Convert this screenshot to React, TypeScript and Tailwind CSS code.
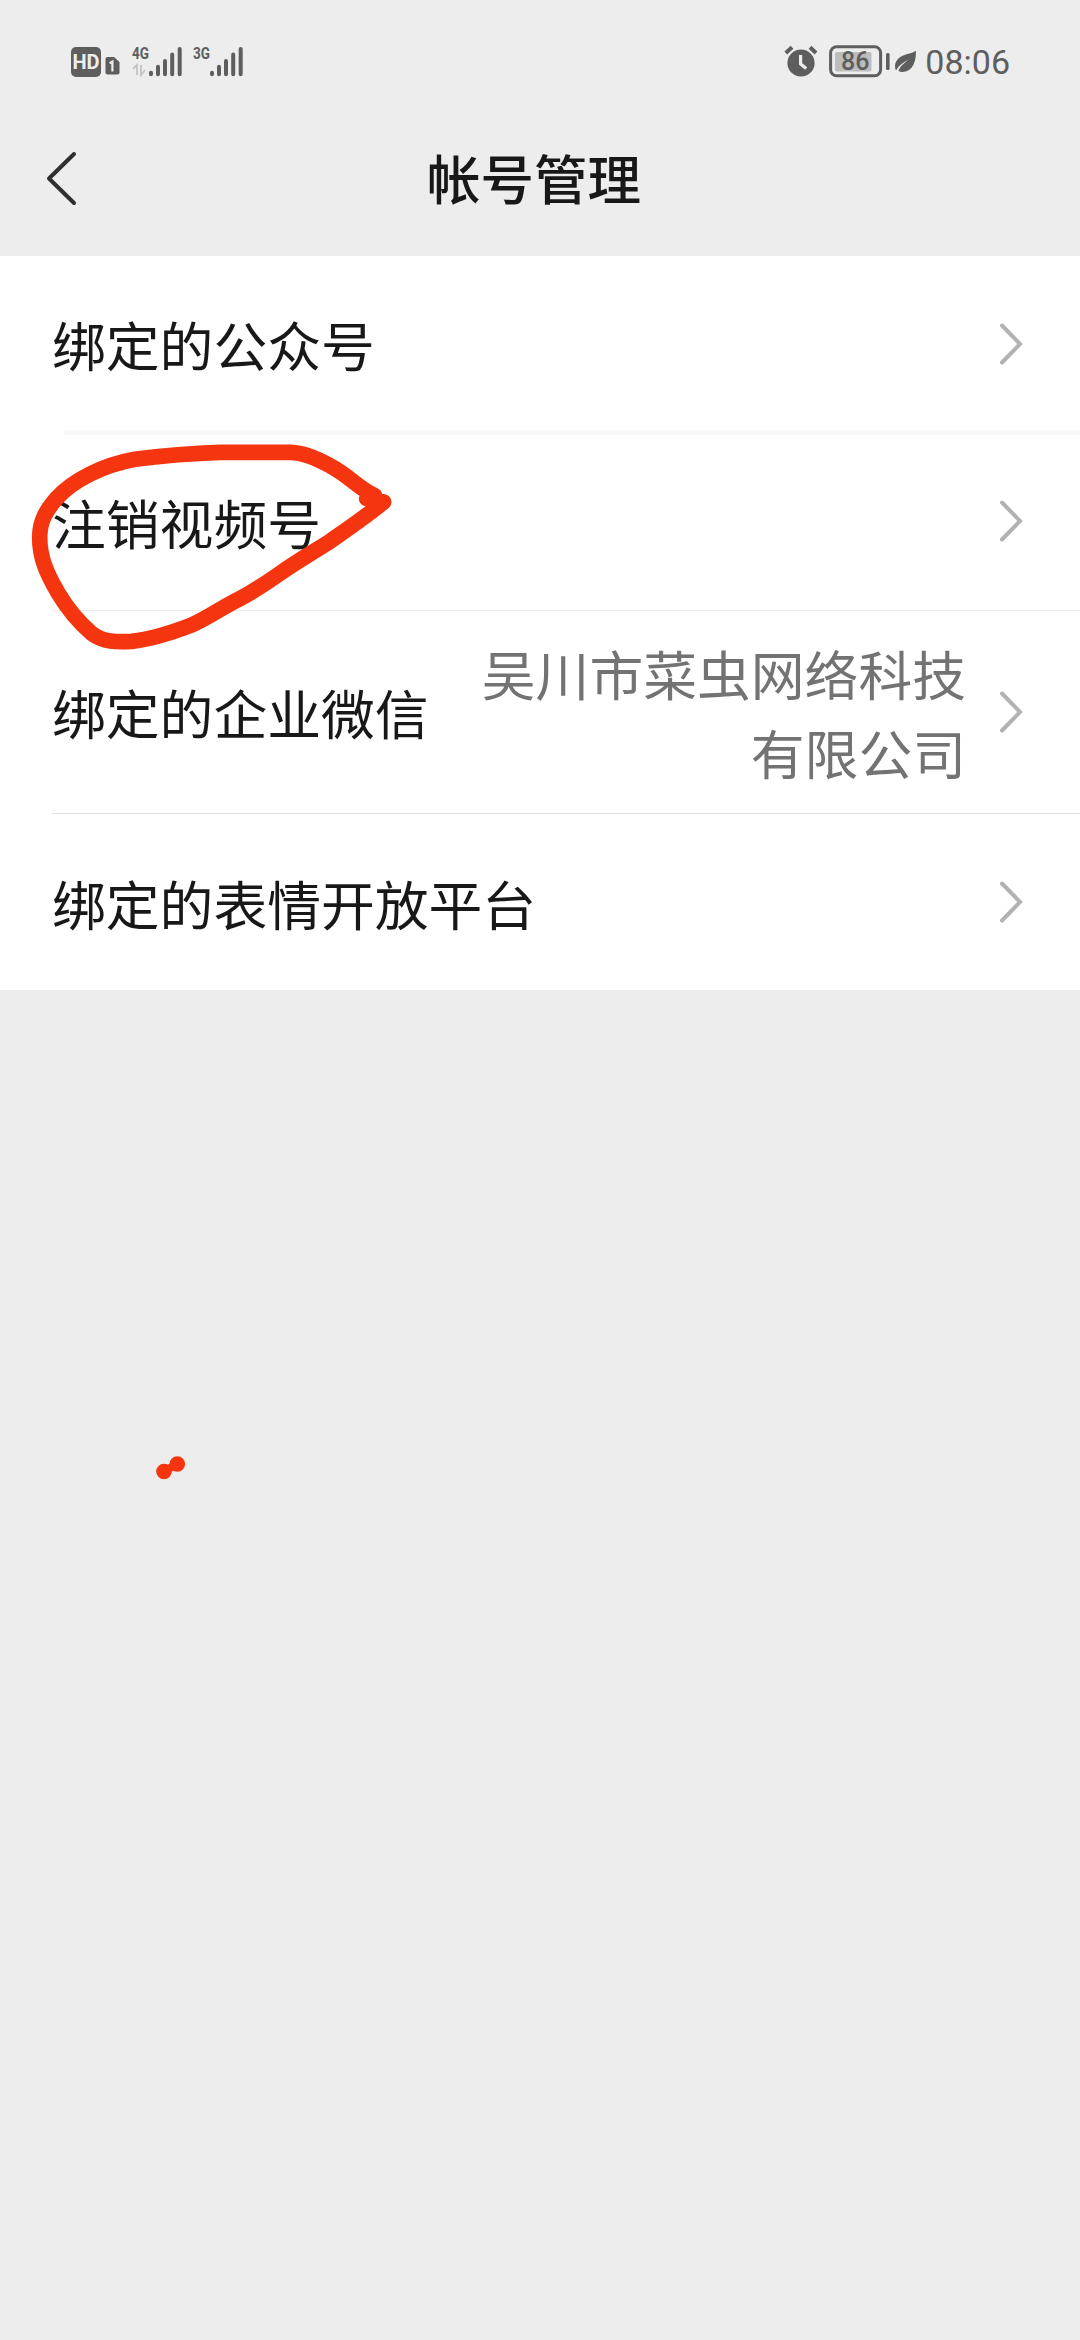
const INK = "#5e5e5e";

function HdBadge() {
  return (
    <div className="mt-[47px] flex h-[30px] w-[30px] items-center justify-center rounded-[5px] bg-[#5e5e5e] font-['Roboto',sans-serif] text-[20px] font-bold leading-none text-[#eeeeee]">
      HD
    </div>
  );
}

function SimCard() {
  return (
    <svg className="ml-[4px] mt-[57px]" width="15" height="18" viewBox="0 0 15 18">
      <path d="M2.5 0H9L14.5 5V15.5Q14.5 17.5 12.5 17.5H2.5Q.5 17.5 .5 15.5V2Q.5 0 2.5 0Z" fill={INK} />
      <path d="M4.6 6.2L7.4 4.6V14.5" fill="none" stroke="#eee" strokeWidth="2.2" />
    </svg>
  );
}

function Signal({ label, arrows }: { label: string; arrows?: boolean }) {
  return (
    <svg className="mt-[44px]" width="52" height="34" viewBox="0 0 52 34">
      <text x="0" y="15" fontFamily="Roboto, sans-serif" fontSize="17" fontWeight="700" fill={INK} textLength="17" lengthAdjust="spacingAndGlyphs">
        {label}
      </text>
      {arrows && (
        <g stroke="#c4c4c4" strokeWidth="1.8" fill="none">
          <path d="M1 25L5 21V31M9 21V31L13 26" />
        </g>
      )}
      <g stroke={INK} strokeWidth="4" strokeLinecap="round">
        <path d="M19 28.8V30.2M26 22.8V30.2M33 17V30.2M40.2 10.5V30.2M47.7 5V30.2" />
      </g>
    </svg>
  );
}

function AlarmClock() {
  return (
    <svg className="mt-[45px]" width="34" height="33" viewBox="0 0 34 33">
      <circle cx="17" cy="18" r="13.6" fill={INK} />
      <path d="M1.8 8L8 2.2M26 2.2L32 8" stroke={INK} strokeWidth="4" />
      <path d="M16.6 10V19L22.2 23.5" fill="none" stroke="#eee" strokeWidth="3.2" />
    </svg>
  );
}

function Battery() {
  return (
    <svg className="ml-[11px] mt-[45px]" width="62" height="33" viewBox="0 0 62 33">
      <rect x="1.6" y="1.8" width="50" height="29" rx="6" fill="none" stroke={INK} strokeWidth="3" />
      <rect x="6" y="7" width="36.5" height="19.5" rx="2" fill="#bdbdbd" />
      <rect x="57" y="8" width="3.6" height="17" rx="1.5" fill={INK} />
      <text x="26.2" y="25" textAnchor="middle" fontFamily="Roboto, sans-serif" fontSize="25" fontWeight="500" fill={INK}>
        86
      </text>
    </svg>
  );
}

function Leaf() {
  return (
    <svg className="ml-[3px] mt-[50px]" width="23" height="24" viewBox="0 0 23 24">
      <path d="M21.8 .8C22.4 10 19.5 17.5 14 20.5C10.5 22.3 7 22.3 4.5 21C5.2 18 9 13.5 14.5 9.8C8.5 12.5 4.5 16 2 20.5C-.5 15 2 9 8 6C13 3.6 18 3.6 21.8 .8Z" fill={INK} />
    </svg>
  );
}

function StatusBar() {
  return (
    <div className="flex h-[90px] items-start justify-between pl-[71px] pr-[70px]">
      <div className="flex items-start">
        <HdBadge />
        <SimCard />
        <div className="ml-[12px] flex gap-[9px]">
          <Signal label="4G" arrows />
          <Signal label="3G" />
        </div>
      </div>
      <div className="flex items-start">
        <AlarmClock />
        <Battery />
        <Leaf />
        <span className="ml-[8px] mt-[42px] font-['Roboto',sans-serif] text-[34px] leading-[40px] text-[#5e5e5e]">08:06</span>
      </div>
    </div>
  );
}

function Chevron() {
  return (
    <svg className="shrink-0" width="26" height="44" viewBox="0 0 26 44">
      <path d="M4 3.5L22 22L4 40.5" fill="none" stroke="#b2b2b2" strokeWidth="4" strokeLinecap="round" />
    </svg>
  );
}

function Row({ label, size, detail, divider }: { label: string; size: string; detail?: string[]; divider?: string }) {
  return (
    <div className={`relative flex items-center justify-between pl-[52px] pr-[56px] ${size}`}>
      <span className="whitespace-nowrap pt-[2px]">{label}</span>
      <div className="flex items-center">
        {detail && (
          <div className="mr-[32px] text-right leading-[79px] text-[#737373]">
            {detail.map((line) => (
              <div key={line} className="whitespace-nowrap">{line}</div>
            ))}
          </div>
        )}
        <Chevron />
      </div>
      {divider && <div className={`absolute bottom-0 right-0 ${divider}`} />}
    </div>
  );
}

function RedLoop() {
  return (
    <svg className="pointer-events-none absolute left-[20px] top-[430px]" width="400" height="230" viewBox="0 0 1200 690">
      <path
        d="M1064 197C1015 175 985 135 930 107C890 85 850 67 810 67H600C500 70 420 78 345 88C250 105 160 150 110 205C75 245 60 275 59 320C59 385 80 430 115 490C145 540 180 580 215 610C250 637 290 636 335 634C395 628 450 610 515 585C560 566 610 530 660 506C700 484 740 458 780 430C830 395 880 366 930 334C990 292 1040 258 1091 216L1040 206"
        fill="none"
        stroke="#f5350f"
        strokeWidth="47"
        strokeLinecap="round"
        strokeLinejoin="round"
      />
    </svg>
  );
}

export default function App() {
  return (
    <div className="relative h-[2340px] w-[1080px] overflow-hidden bg-[#ededed] font-['Noto_Sans_CJK_SC',sans-serif] text-[53.8px] text-[#181818]">
      <StatusBar />
      <header className="relative flex h-[166px] items-start justify-center pr-[12px]">
        <svg className="absolute left-[42px] top-[58px]" width="40" height="60" viewBox="0 0 40 60">
          <path d="M32 6L7 30.5L32 55" fill="none" stroke="#303030" strokeWidth="4" strokeLinecap="round" strokeLinejoin="round" />
        </svg>
        <h1 className="mt-[47px] text-[53.5px] font-medium leading-[80px]">帐号管理</h1>
      </header>
      <main className="bg-white">
        <Row label="绑定的公众号" size="h-[179px] pb-[4px]" divider="left-[64px] h-[5px] bg-[#f8f8f8]" />
        <Row label="注销视频号" size="h-[176px] pb-[4px]" divider="left-[52px] h-px bg-[#ececec]" />
        <Row label="绑定的企业微信" size="h-[203px] pb-[2px]" detail={["吴川市菜虫网络科技", "有限公司"]} divider="left-[52px] h-px bg-[#e2e2e2]" />
        <Row label="绑定的表情开放平台" size="h-[176px]" />
      </main>
      <RedLoop />
      <svg className="absolute left-[140px] top-[1440px]" width="60" height="60" viewBox="0 0 60 60">
        <path d="M24 31.5L37 24" stroke="#f5350f" strokeWidth="8" />
        <circle cx="24" cy="31.5" r="7.8" fill="#f5350f" />
        <circle cx="37.3" cy="24" r="7.8" fill="#f5350f" />
      </svg>
    </div>
  );
}
